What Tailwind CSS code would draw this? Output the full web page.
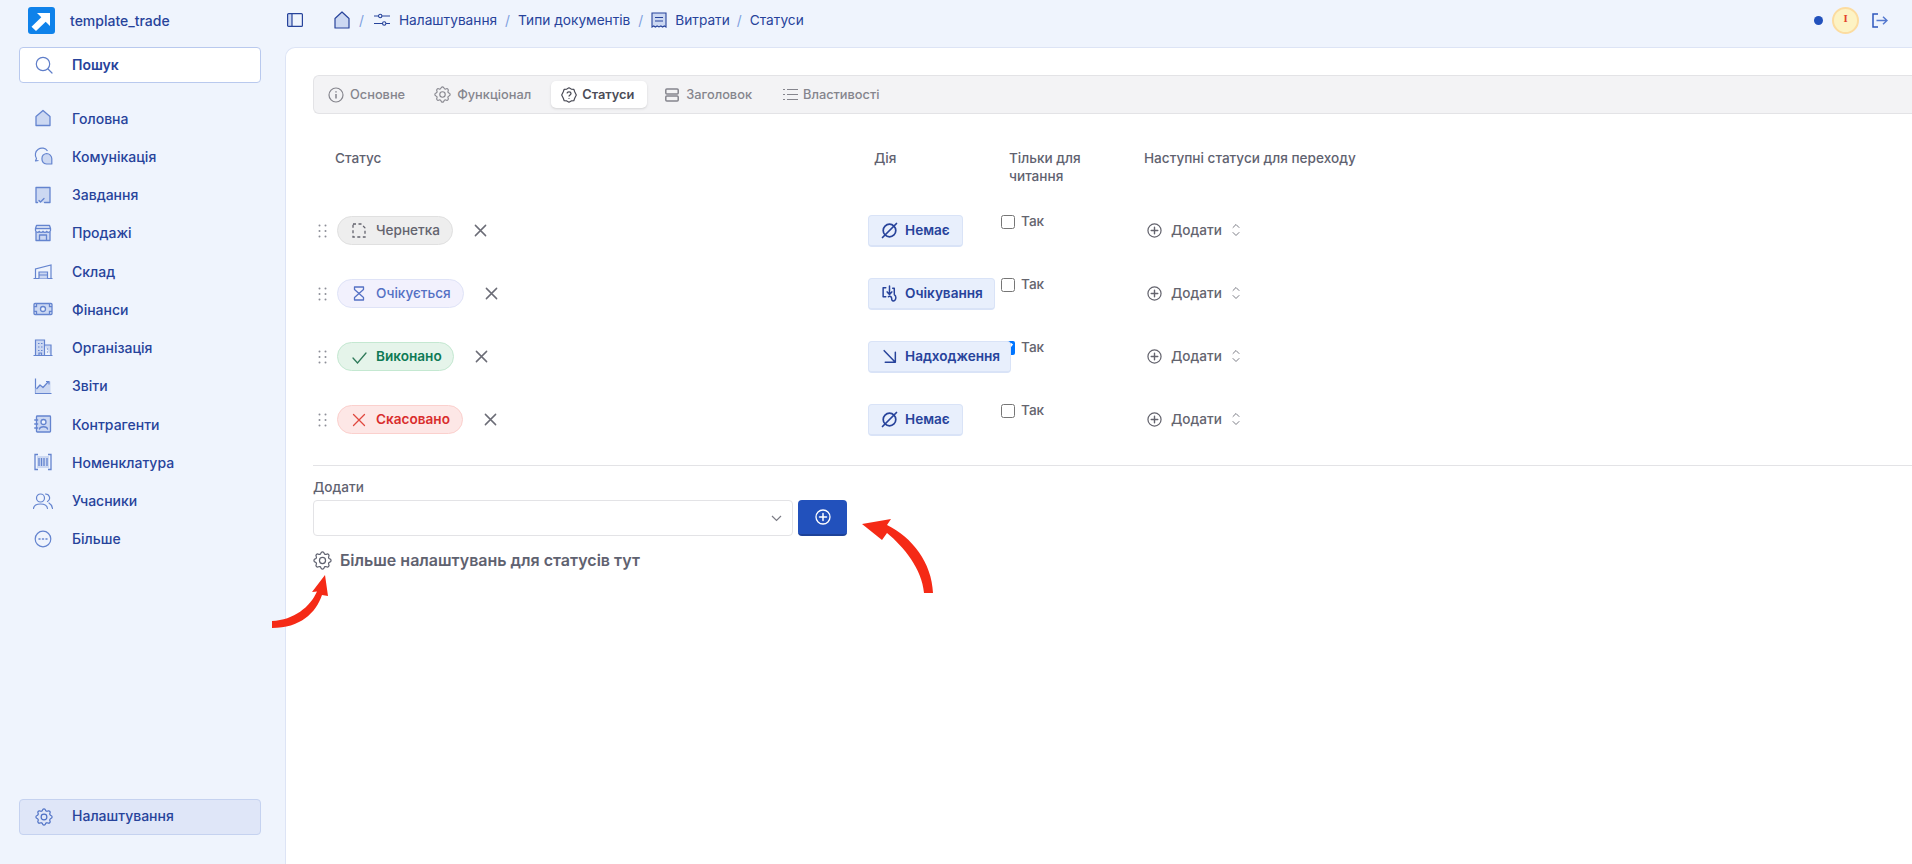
<!DOCTYPE html>
<html lang="uk">
  <head>
    <meta charset="UTF-8" />
    <meta name="viewport" content="width=device-width, initial-scale=1.0" />
    <title>Статуси</title>
    <script src="https://cdn.jsdelivr.net/npm/@tailwindcss/browser@4"></script>
  </head>
  <body class="bg-[#eff4fd] font-['Inter',sans-serif] text-[#27439b] overflow-hidden">

    <!-- shared icons -->
    <svg class="hidden">
      <symbol id="gear" viewBox="2 2 20 20" fill="none" stroke="currentColor" stroke-width="1.3" stroke-linejoin="round">
        <path d="M10.325 4.317c.426 -1.756 2.924 -1.756 3.35 0a1.724 1.724 0 0 0 2.573 1.066c1.543 -.94 3.31 .826 2.37 2.37a1.724 1.724 0 0 0 1.065 2.572c1.756 .426 1.756 2.924 0 3.35a1.724 1.724 0 0 0 -1.066 2.573c.94 1.543 -.826 3.31 -2.37 2.37a1.724 1.724 0 0 0 -2.572 1.065c-.426 1.756 -2.924 1.756 -3.35 0a1.724 1.724 0 0 0 -2.573 -1.066c-1.543 .94 -3.31 -.826 -2.37 -2.37a1.724 1.724 0 0 0 -1.065 -2.572c-1.756 -.426 -1.756 -2.924 0 -3.35a1.724 1.724 0 0 0 1.066 -2.573c-.94 -1.543 .826 -3.31 2.37 -2.37c1 .608 2.296 .07 2.572 -1.065z"/>
        <circle cx="12" cy="12" r="3.2"/>
      </symbol>
      <symbol id="grip" viewBox="0 0 9 14" fill="#8d8f98">
        <circle cx="1.5" cy="1.5" r="1"/><circle cx="7.5" cy="1.5" r="1"/>
        <circle cx="1.5" cy="7" r="1"/><circle cx="7.5" cy="7" r="1"/>
        <circle cx="1.5" cy="12.5" r="1"/><circle cx="7.5" cy="12.5" r="1"/>
      </symbol>
      <symbol id="close" viewBox="0 0 14 14" fill="none" stroke="#6b6c76" stroke-width="1.6" stroke-linecap="round">
        <path d="M1.5 1.5l11 11M12.5 1.5l-11 11"/>
      </symbol>
      <symbol id="ban" viewBox="0 0 17 17" fill="none" stroke="#27439b" stroke-width="1.7" stroke-linecap="round">
        <circle cx="8.5" cy="8.5" r="6.300"/><path d="M15.500 1.500L1.500 15.500"/>
      </symbol>
      <symbol id="plus-circle" viewBox="0 0 16 16" fill="none" stroke="currentColor" stroke-width="1.3" stroke-linecap="round">
        <circle cx="8" cy="8" r="7"/><path d="M8 4.5v7M4.5 8h7" stroke-width="1.5"/>
      </symbol>
      <symbol id="updown" viewBox="0 0 8 14" fill="none" stroke="#7b7c85" stroke-width="1" stroke-linecap="round" stroke-linejoin="round">
        <path d="M1 4.5L4 1.5l3 3M1 9.5l3 3 3-3"/>
      </symbol>
    </svg>

    <div class="flex h-[864px] w-[1912px]">

      <!-- Sidebar -->
      <aside class="w-[285px] shrink-0 flex flex-col">
        <div class="h-[47px] flex items-center pl-[28px] gap-[15px] pb-[6px]">
          <svg class="w-[27px] h-[27px]" viewBox="0 0 27 27">
            <rect width="27" height="27" rx="3" fill="#0f82ea"/>
            <path d="M9 6h13v13l-4.3-4.3L8 24 3.5 19.8l9.8-9.500z" fill="#fff"/>
          </svg>
          <span class="text-[14px] font-medium">template_trade</span>
        </div>
        <div class="mx-[19px] w-[242px] h-[36px] bg-white border border-[#b9c9ee] rounded-[4px] flex items-center shrink-0">
          <svg class="w-[18px] h-[18px] ml-[15px]" viewBox="0 0 18 18" fill="none" stroke="#5f7ec9" stroke-width="1.2" stroke-linecap="round">
            <circle cx="8" cy="8" r="6.7"/><path d="M13 13l4 4"/>
          </svg>
          <span class="ml-[19px] pb-[2px] text-[14px] font-semibold">Пошук</span>
        </div>

        <nav class="mt-[16px] mx-[19px] flex flex-col text-[14px] font-medium">
          <a class="h-[38.25px] flex items-center">
            <svg class="w-[18px] h-[18px] ml-[15px]" viewBox="0 0 18 18" fill="#ccd8f2" stroke="#6484cf" stroke-width="1.3" stroke-linejoin="round"><path d="M2 7.500L9 1.500l7 6v9H2z"/></svg>
            <span class="ml-[20px]">Головна</span>
          </a>
          <a class="h-[38.25px] flex items-center">
            <svg class="w-[19px] h-[18px] ml-[15px]" viewBox="0 0 19 18" fill="none" stroke="#6484cf" stroke-width="1.2" stroke-linejoin="round"><path d="M13.500 4A6.500 6.500 0 1 0 2.500 11.500l-1 2.500 3-.5"/><path d="M12.500 6.500a5.300 5.300 0 0 1 5.300 5.300V17H12.500a5.300 5.300 0 0 1 0-10.500z" fill="#ccd8f2"/></svg>
            <span class="ml-[19px]">Комунікація</span>
          </a>
          <a class="h-[38.25px] flex items-center">
            <svg class="w-[18px] h-[18px] ml-[15px]" viewBox="0 0 18 18" fill="none" stroke="#6484cf" stroke-width="1.3" stroke-linecap="round" stroke-linejoin="round"><path d="M2 1.500h14v15h-14z" fill="#ccd8f2" stroke="none"/><path d="M10.500 16.500h5.500v-15H2v15h1.500"/><path d="M5 14.500l1.500 1.500L10 12.500"/></svg>
            <span class="ml-[20px]">Завдання</span>
          </a>
          <a class="h-[38.25px] flex items-center">
            <svg class="w-[18px] h-[18px] ml-[15px]" viewBox="0 0 18 18" fill="none" stroke="#6484cf" stroke-width="1.3" stroke-linejoin="round"><path d="M2 8v8.500h14V8" fill="#ccd8f2"/><path d="M2.500 1.500h13l1 3v2a2 2 0 0 1-3.700.8 2.200 2.200 0 0 1-3.800 0 2.200 2.200 0 0 1-3.800 0 2 2 0 0 1-3.700-.8v-2zM1.500 4.500h15" fill="#eff4fd"/><path d="M5.500 16.500V11h7v5.500"/></svg>
            <span class="ml-[20px]">Продажі</span>
          </a>
          <a class="h-[38.25px] flex items-center">
            <svg class="w-[20px] h-[18px] ml-[14px]" viewBox="0 0 20 18" fill="none" stroke="#6484cf" stroke-width="1.2"><path d="M2.500 16.500V7l15.500-4v13.500M0.500 16.500h19"/><path d="M6 16.500v-6.500h8.500v6.500M6 13h8.500" fill="#ccd8f2"/></svg>
            <span class="ml-[19px]">Склад</span>
          </a>
          <a class="h-[38.25px] flex items-center">
            <svg class="w-[20px] h-[18px] ml-[14px]" viewBox="0 0 20 18" fill="#ccd8f2" stroke="#6484cf" stroke-width="1.3"><rect x="1" y="3.500" width="18" height="11" rx="1"/><circle cx="10" cy="9" r="2.500" fill="#eff4fd"/><path d="M1 6.500h2.500v-3M19 6.500h-2.500v-3M1 11.500h2.500v3M19 11.500h-2.500v3" fill="#eff4fd"/></svg>
            <span class="ml-[19px]">Фінанси</span>
          </a>
          <a class="h-[38.25px] flex items-center">
            <svg class="w-[20px] h-[18px] ml-[14px]" viewBox="0 0 20 18" fill="#ccd8f2" stroke="#6484cf" stroke-width="1.2"><path d="M2.500 16.500V1h9v15.500M11.500 6h6.500v10.500M0.500 16.500h19"/><path d="M5 4.500h1.500M8 4.500h1.500M5 8h1.500M8 8h1.500M5 11.500h1.500M8 11.500h1.500M6 16.500v-2.500h2.500v2.500M14.500 9.500v1M14.500 12.500v1" fill="none"/></svg>
            <span class="ml-[19px]">Організація</span>
          </a>
          <a class="h-[38.25px] flex items-center">
            <svg class="w-[18px] h-[18px] ml-[15px]" viewBox="0 0 18 18" fill="none" stroke="#6484cf" stroke-width="1.2" stroke-linejoin="round"><path d="M1.500 1.500v15h16"/><path d="M1.500 11.500l4.500-4 3 2.500 5.500-6 2 .5v11.500H1.500z" fill="#ccd8f2" stroke="none"/><path d="M2.500 12l3.500-4 3 2.500 5-5.500M12 4.500h3v3"/></svg>
            <span class="ml-[20px]">Звіти</span>
          </a>
          <a class="h-[38.25px] flex items-center">
            <svg class="w-[18px] h-[18px] ml-[15px]" viewBox="0 0 18 18" fill="none" stroke="#6484cf" stroke-width="1.3" stroke-linecap="round"><rect x="2.500" y="1" width="14" height="16" rx=".8" fill="#ccd8f2"/><circle cx="9.500" cy="7" r="2.500" fill="#eff4fd"/><path d="M5.500 14c.5-3 7.500-3 8 0M.7 5h3M.7 9h3M.7 13h3"/></svg>
            <span class="ml-[20px]">Контрагенти</span>
          </a>
          <a class="h-[38.25px] flex items-center">
            <svg class="w-[18px] h-[18px] ml-[15px]" viewBox="0 0 18 18" fill="none" stroke="#6484cf" stroke-width="1.300"><rect x="3" y="3" width="12" height="12" fill="#ccd8f2" stroke="none"/><path d="M4 1.500H1v15h3M14 1.500h3v15h-3"/><path d="M5 5v8M7.500 5v8M10 5v8M13 5v8"/></svg>
            <span class="ml-[20px]">Номенклатура</span>
          </a>
          <a class="h-[38.25px] flex items-center">
            <svg class="w-[20px] h-[18px] ml-[14px]" viewBox="0 0 20 18" fill="none" stroke="#6484cf" stroke-width="1.2" stroke-linecap="round"><circle cx="7.500" cy="6" r="4"/><path d="M.5 16.500c.8-6 13.200-6 14 0M12.500 2a4 4 0 0 1 2 7.500M16 11c1.800.9 3 2.800 3.500 5.500"/></svg>
            <span class="ml-[19px]">Учасники</span>
          </a>
          <a class="h-[38.25px] flex items-center">
            <svg class="w-[18px] h-[18px] ml-[15px]" viewBox="0 0 18 18" fill="none" stroke="#6484cf" stroke-width="1.2"><circle cx="9" cy="9" r="7.800"/><path d="M5 9h1M8.500 9h1M12 9h1" stroke-width="1.500" stroke-linecap="round"/></svg>
            <span class="ml-[20px]">Більше</span>
          </a>
        </nav>

        <a class="mt-auto mb-[29px] mx-[19px] w-[242px] h-[36px] shrink-0 bg-[#dfe6f8] border border-[#c5d2f0] rounded-[4px] flex items-center text-[14px] font-medium">
          <svg class="w-[18px] h-[18px] ml-[15px] text-[#4c6fc4]"><use href="#gear"/></svg>
          <span class="ml-[19px] pb-[3px]">Налаштування</span>
        </a>
      </aside>

      <div class="flex-1 min-w-0 flex flex-col">
        <!-- Breadcrumb bar -->
        <header class="h-[47px] shrink-0 flex items-center text-[13.7px] pb-[7px] pr-[24px]">
          <svg class="w-[16px] h-[14px] ml-[2px]" viewBox="0 0 16 14" fill="none" stroke="#27439b" stroke-width="1.200"><rect x="1" y="1" width="4" height="12" fill="#ccd8f2" stroke="none"/><rect x=".6" y=".6" width="14.800" height="12.800" rx="1"/><path d="M5 .6v12.800"/></svg>
          <svg class="w-[16px] h-[18px] ml-[31px]" viewBox="0 0 16 18" fill="#ccd8f2" stroke="#27439b" stroke-width="1.200" stroke-linejoin="round"><path d="M1 7.500L8 1l7 6.500V17H1z"/></svg>
          <span class="ml-[9px] text-[#7ea0df]">/</span>
          <svg class="w-[16px] h-[14px] ml-[10px]" viewBox="0 0 16 14" fill="none" stroke="#27439b" stroke-width="1.100"><path d="M0 3h4.500M8 3h8M0 10.500h8.500M12 10.500h4"/><circle cx="6.200" cy="3" r="1.700"/><circle cx="10.200" cy="10.500" r="1.700"/></svg>
          <span class="ml-[9px]">Налаштування</span>
          <span class="ml-[8px] text-[#7ea0df]">/</span>
          <span class="ml-[8px]">Типи документів</span>
          <span class="ml-[8px] text-[#7ea0df]">/</span>
          <svg class="w-[16px] h-[16px] ml-[8px]" viewBox="0 0 16 16" fill="#ccd8f2" stroke="#27439b" stroke-width="1.100"><path d="M1 1h14v14l-1.700-1-1.700 1-1.700-1-1.900 1-1.900-1-1.700 1-1.700-1L1 15z"/><path d="M4 5.500h8M4 9h8" fill="none"/></svg>
          <span class="ml-[8px]">Витрати</span>
          <span class="ml-[7px] text-[#7ea0df]">/</span>
          <span class="ml-[8px]">Статуси</span>

          <span class="ml-auto w-[9px] h-[9px] rounded-full bg-[#2251bc]"></span>
          <span class="ml-[9px] w-[27px] h-[27px] rounded-full bg-[#fdf3c4] border-2 border-[#fcdca0] flex items-center justify-center text-[#e3422f] text-[9px] font-['DejaVu_Serif',serif] font-bold">I</span>
          <svg class="w-[16px] h-[15px] ml-[13px]" viewBox="0 0 16 15" fill="none" stroke="#2f57bd" stroke-width="1.500"><path d="M6 1H1v13h5"/><path d="M4.500 7.500H15M11 3.800l4 3.700-4 3.700" stroke="#5478cf"/></svg>
        </header>

        <!-- Content card -->
        <main class="flex-1 min-h-0 bg-white border-l border-t border-[#dde4f5] rounded-tl-[10px] pt-[27px] pl-[27px] relative">
          <!-- Tabs -->
          <div class="h-[39px] bg-[#f3f3f5] border border-[#e3e3e6] border-r-0 rounded-l-[6px] flex items-center pl-[14px] text-[12.8px] font-medium text-[#85858d]">
            <svg class="w-[16px] h-[16px]" viewBox="0 0 16 16" fill="none" stroke="#85858d" stroke-width="1.200"><circle cx="8" cy="8" r="7"/><path d="M8 7v4.500M8 4.300v1.200" stroke-width="1.500"/></svg>
            <span class="ml-[6px]">Основне</span>
            <svg class="w-[17px] h-[17px] ml-[29px]"><use href="#gear"/></svg>
            <span class="ml-[6px]">Функціонал</span>
            <div class="ml-[20px] h-[27px] w-[96px] bg-white rounded-[5px] shadow-sm flex items-center pl-[10px] text-[#4b4c57] font-semibold">
              <svg class="w-[16px] h-[16px]" viewBox="0 0 16 16" fill="none" stroke="#4b4c57" stroke-width="1.200" stroke-linejoin="round"><path d="M8 .8l2.200 1.300 2.600.2.900 2.400L15.300 8l-1.600 3.300-.9 2.400-2.600.2L8 15.200l-2.200-1.300-2.600-.2-.9-2.400L.7 8l1.600-3.300.9-2.400 2.600-.2z"/><path d="M6 6.300C6.300 4.300 10 4.400 10 6.500c0 1.400-2 1.500-2 3M8 11v.8" stroke-width="1.300"/></svg>
              <span class="ml-[5px]">Статуси</span>
            </div>
            <svg class="w-[14px] h-[14px] ml-[18px]" viewBox="0 0 14 14" fill="none" stroke="#85858d" stroke-width="1.500"><rect x=".8" y="1" width="12.400" height="5" rx="1"/><rect x=".8" y="8" width="12.400" height="5" rx="1"/></svg>
            <span class="ml-[7px]">Заголовок</span>
            <svg class="w-[15px] h-[13px] ml-[31px]" viewBox="0 0 15 13" fill="none" stroke="#85858d" stroke-width="1.200"><path d="M0 1.500h2M4 1.500h11M0 6.500h2M4 6.500h11M0 11.500h2M4 11.500h11"/></svg>
            <span class="ml-[5px]">Властивості</span>
          </div>

          <!-- Table head -->
          <div class="grid grid-cols-[555px_133px_143px_1fr] pt-[35px] h-[85px] text-[13.6px] leading-[18px] font-medium text-[#5f6270]">
            <div class="pl-[22px]">Статус</div>
            <div class="pl-[6px]">Дія</div>
            <div class="pl-[8px] w-[110px]">Тільки для читання</div>
            <div>Наступні статуси для переходу</div>
          </div>

          <!-- Rows -->
          <div class="grid grid-cols-[555px_133px_143px_1fr] grid-rows-[63px_63px_63px_63px] items-center text-[13.6px] font-medium border-b border-[#e3e3e6] pb-[14px]">
            <div class="flex items-center">
              <svg class="w-[9px] h-[14px] ml-[5px]"><use href="#grip"/></svg>
              <div class="ml-[10px] h-[29px] w-[116px] rounded-full bg-[#eeeeee] border border-[#e0e0e0] flex items-center text-[#64646e]">
                <svg class="w-[14px] h-[15px] ml-[14px]" viewBox="0 0 14 15" fill="none" stroke="#64646e" stroke-width="1.300" stroke-dasharray="3 2.500"><path d="M1 1h8.500L13 5v9H1z"/></svg>
                <span class="ml-[10px]">Чернетка</span>
              </div>
              <svg class="w-[13px] h-[13px] ml-[21px]"><use href="#close"/></svg>
            </div>
            <div class="relative z-10 w-max h-[32px] bg-[#e8effc] border border-[#d9e3f7] border-b-2 rounded-[4px] flex items-center px-[12px] text-[#27439b] font-semibold">
              <svg class="w-[17px] h-[17px]"><use href="#ban"/></svg>
              <span class="ml-[7px]">Немає</span>
            </div>
            <label class="self-start mt-[16px] flex items-start text-[#64646e]">
              <input type="checkbox" class="w-[14px] h-[14px]" />
              <span class="ml-[6px] -mt-[1px] leading-[14px]">Так</span>
            </label>
            <div class="flex items-center text-[#64646e]">
              <svg class="w-[15px] h-[15px] ml-[3px]"><use href="#plus-circle"/></svg>
              <span class="ml-[9px]">Додати</span>
              <svg class="w-[8px] h-[14px] ml-[10px]"><use href="#updown"/></svg>
            </div>

            <div class="flex items-center">
              <svg class="w-[9px] h-[14px] ml-[5px]"><use href="#grip"/></svg>
              <div class="ml-[10px] h-[29px] w-[127px] rounded-full bg-[#f2f1fd] border border-[#dfe3f7] flex items-center text-[#5470c4]">
                <svg class="w-[14px] h-[15px] ml-[14px]" viewBox="0 0 14 15" fill="none" stroke="#5470c4" stroke-width="1.300" stroke-linejoin="round"><path d="M2.500 1h9v2.500L7 7.500l4.500 4V14h-9v-2.500L7 7.500 2.500 3.500z"/></svg>
                <span class="ml-[10px]">Очікується</span>
              </div>
              <svg class="w-[13px] h-[13px] ml-[21px]"><use href="#close"/></svg>
            </div>
            <div class="relative z-10 w-max h-[32px] bg-[#e8effc] border border-[#d9e3f7] border-b-2 rounded-[4px] flex items-center pl-[12px] pr-[11px] text-[#27439b] font-semibold">
              <svg class="w-[17px] h-[17px]" viewBox="0 0 16 16" fill="none" stroke="#27439b" stroke-width="1.400" stroke-linejoin="round" stroke-linecap="round"><path d="M4.500 2.500H2v8.500h2.500M8 1v7.500M5.800 6.500L8 9l2.200-2.500M11 3h1.500v5"/><path d="M7 11c1.300-1 3 0 3 1.500s.5 2.500 1.500 2.500 2.500-1 2.500-3-1.500-3-1.500-3"/></svg>
              <span class="ml-[7px]">Очікування</span>
            </div>
            <label class="self-start mt-[16px] flex items-start text-[#64646e]">
              <input type="checkbox" class="w-[14px] h-[14px]" />
              <span class="ml-[6px] -mt-[1px] leading-[14px]">Так</span>
            </label>
            <div class="flex items-center text-[#64646e]">
              <svg class="w-[15px] h-[15px] ml-[3px]"><use href="#plus-circle"/></svg>
              <span class="ml-[9px]">Додати</span>
              <svg class="w-[8px] h-[14px] ml-[10px]"><use href="#updown"/></svg>
            </div>

            <div class="flex items-center">
              <svg class="w-[9px] h-[14px] ml-[5px]"><use href="#grip"/></svg>
              <div class="ml-[10px] h-[29px] w-[117px] rounded-full bg-[#e5f4ea] border border-[#c4e8d1] flex items-center text-[#0f7a55] font-semibold">
                <svg class="w-[15px] h-[14px] ml-[14px]" viewBox="0 0 15 14" fill="none" stroke="#2f7a5a" stroke-width="1.300" stroke-linecap="round"><path d="M1 8l4.500 5L14 3"/></svg>
                <span class="ml-[9px]">Виконано</span>
              </div>
              <svg class="w-[13px] h-[13px] ml-[21px]"><use href="#close"/></svg>
            </div>
            <div class="relative z-10 w-max h-[32px] bg-[#e8effc] border border-[#d9e3f7] border-b-2 rounded-[4px] flex items-center pl-[12px] pr-[10px] text-[#27439b] font-semibold">
              <svg class="w-[17px] h-[17px]" viewBox="0 0 16 16" fill="none" stroke="#27439b" stroke-width="1.400" stroke-linecap="round" stroke-linejoin="round"><path d="M3 2.500l10 10.500M4 13.500h9.500V4"/></svg>
              <span class="ml-[7px]">Надходження</span>
            </div>
            <label class="self-start mt-[16px] flex items-start text-[#64646e]">
              <input type="checkbox" checked class="w-[14px] h-[14px]" />
              <span class="ml-[6px] -mt-[1px] leading-[14px]">Так</span>
            </label>
            <div class="flex items-center text-[#64646e]">
              <svg class="w-[15px] h-[15px] ml-[3px]"><use href="#plus-circle"/></svg>
              <span class="ml-[9px]">Додати</span>
              <svg class="w-[8px] h-[14px] ml-[10px]"><use href="#updown"/></svg>
            </div>

            <div class="flex items-center">
              <svg class="w-[9px] h-[14px] ml-[5px]"><use href="#grip"/></svg>
              <div class="ml-[10px] h-[29px] w-[126px] rounded-full bg-[#fde7e6] border border-[#fbd0cd] flex items-center text-[#d92d2d] font-semibold">
                <svg class="w-[14px] h-[14px] ml-[14px]" viewBox="0 0 14 14" fill="none" stroke="#e0483f" stroke-width="1.300" stroke-linecap="round"><path d="M1.500 1.500l11 11M12.500 1.500l-11 11"/></svg>
                <span class="ml-[10px]">Скасовано</span>
              </div>
              <svg class="w-[13px] h-[13px] ml-[21px]"><use href="#close"/></svg>
            </div>
            <div class="relative z-10 w-max h-[32px] bg-[#e8effc] border border-[#d9e3f7] border-b-2 rounded-[4px] flex items-center px-[12px] text-[#27439b] font-semibold">
              <svg class="w-[17px] h-[17px]"><use href="#ban"/></svg>
              <span class="ml-[7px]">Немає</span>
            </div>
            <label class="self-start mt-[16px] flex items-start text-[#64646e]">
              <input type="checkbox" class="w-[14px] h-[14px]" />
              <span class="ml-[6px] -mt-[1px] leading-[14px]">Так</span>
            </label>
            <div class="flex items-center text-[#64646e]">
              <svg class="w-[15px] h-[15px] ml-[3px]"><use href="#plus-circle"/></svg>
              <span class="ml-[9px]">Додати</span>
              <svg class="w-[8px] h-[14px] ml-[10px]"><use href="#updown"/></svg>
            </div>
          </div>

          <!-- Add status -->
          <div class="mt-[12px] text-[13.6px] leading-[18px] font-medium text-[#5f6270]">Додати</div>
          <div class="mt-[4px] flex gap-[5px]">
            <div class="w-[480px] h-[36px] bg-white border border-[#e3e3e6] rounded-[4px] flex items-center justify-end pr-[10px]">
              <svg class="w-[11px] h-[7px]" viewBox="0 0 11 7" fill="none" stroke="#7b7c85" stroke-width="1.200"><path d="M1 1l4.500 4.500L10 1"/></svg>
            </div>
            <button class="w-[49px] h-[36px] bg-[#2251bc] border-b-2 border-[#1d4299] rounded-[4px] flex items-center justify-center text-white">
              <svg class="w-[16px] h-[16px]"><use href="#plus-circle"/></svg>
            </button>
          </div>
          <div class="mt-[12px] flex items-center text-[#5f6270]">
            <svg class="w-[19px] h-[19px]"><use href="#gear"/></svg>
            <span class="ml-[8px] text-[16px] font-semibold">Більше налаштувань для статусів тут</span>
          </div>

          <!-- Red annotation arrows -->
          <svg class="absolute left-[-14px] top-[527px] w-[56px] h-[53px]" viewBox="0 0 56 53" fill="#f52a16">
            <path d="M53 0L40 17l5-.5C38 32 22 45 0 46v7c28 0 44-15 50-33l6 1z"/>
          </svg>
          <svg class="absolute left-[576px] top-[471px] w-[71px] h-[74px]" viewBox="0 0 71 74" fill="#f52a16">
            <path d="M0 5L29 0l-4 6c25 12 45 38 46 68h-9c-2-24-20-46-37-60l-5 7z"/>
          </svg>
        </main>
      </div>
    </div>
  </body>
</html>
